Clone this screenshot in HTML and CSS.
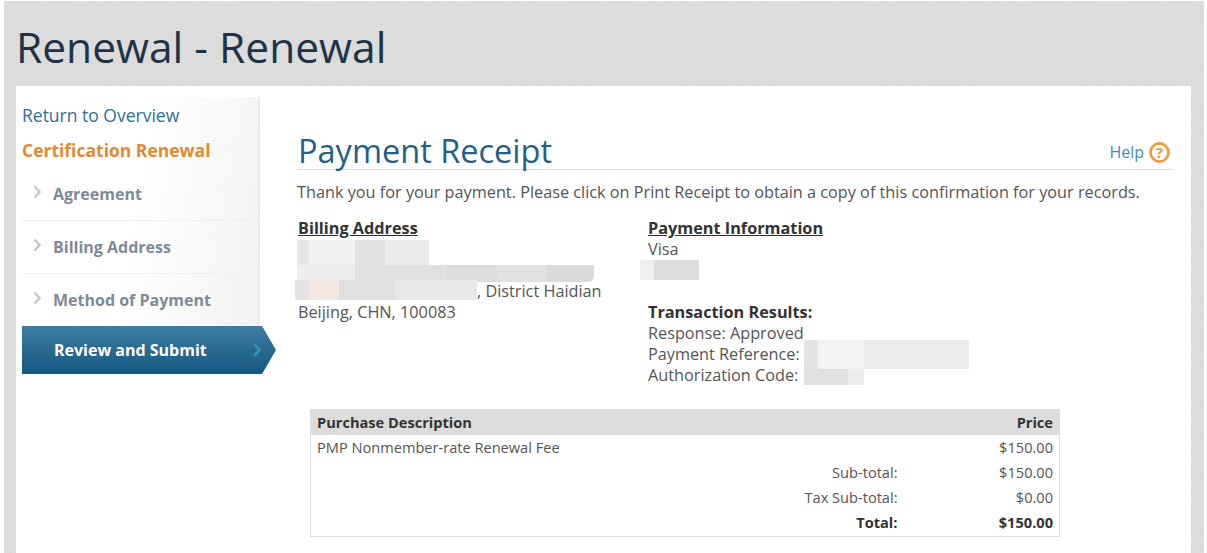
FILE: index.html
```html
<!DOCTYPE html>
<html lang="en">
<head>
<meta charset="utf-8">
<title>Renewal - Renewal</title>
<link rel="stylesheet" href="styles.css">
</head>
<body>
<div class="page">
  <h1 class="page-title">Renewal - Renewal</h1>
  <div class="panel">
    <aside class="sidebar">
      <a class="back-link">Return to Overview</a>
      <div class="side-heading">Certification Renewal</div>
      <ul class="steps">
        <li class="step"><svg class="chev" viewBox="0 0 8 14"><path d="M1.5 1.5 6.5 7l-5 5.5"/></svg>Agreement</li>
        <li class="step"><svg class="chev" viewBox="0 0 8 14"><path d="M1.5 1.5 6.5 7l-5 5.5"/></svg>Billing Address</li>
        <li class="step step-last"><svg class="chev" viewBox="0 0 8 14"><path d="M1.5 1.5 6.5 7l-5 5.5"/></svg>Method of Payment</li>
      </ul>
      <div class="step-active">Review and Submit<svg class="chev-active" viewBox="0 0 8 14"><path d="M1.5 1.5 6.5 7l-5 5.5"/></svg></div>
    </aside>
    <main class="content">
      <div class="title-row">
        <h2 class="receipt-title">Payment Receipt</h2>
        <a class="help">Help<svg class="help-icon" viewBox="0 0 20 20"><circle cx="10" cy="10" r="8.6"/><text x="10" y="15" text-anchor="middle">?</text></svg></a>
      </div>
      <p class="thanks">Thank you for your payment. Please click on Print Receipt to obtain a copy of this confirmation for your records.</p>
      <div class="details">
        <div class="billing">
          <div class="label-u">Billing Address</div>
          <div class="blank-lines"></div>
          <div class="address-tail">, District Haidian</div>
          <div>Beijing, CHN, 100083</div>
          <div class="blur blur-a1"></div>
          <div class="blur blur-a3"></div>
          <div class="blur blur-a4"></div>
        </div>
        <div class="payment">
          <div class="label-u">Payment Information</div>
          <div>Visa</div>
          <div class="gap-line"></div>
          <div class="gap-line"></div>
          <div class="label">Transaction Results:</div>
          <div>Response: Approved</div>
          <div>Payment Reference:</div>
          <div>Authorization Code:</div>
          <div class="blur blur-p1"></div>
          <div class="blur blur-p2"></div>
          <div class="blur blur-p3"></div>
        </div>
      </div>
      <table class="purchase">
        <thead>
          <tr><th class="col-desc">Purchase Description</th><th class="col-sub"></th><th class="col-price">Price</th></tr>
        </thead>
        <tbody>
          <tr><td>PMP Nonmember-rate Renewal Fee</td><td></td><td class="num">$150.00</td></tr>
          <tr><td></td><td class="num">Sub-total:</td><td class="num">$150.00</td></tr>
          <tr><td></td><td class="num">Tax Sub-total:</td><td class="num">$0.00</td></tr>
          <tr class="total"><td></td><td class="num">Total:</td><td class="num">$150.00</td></tr>
        </tbody>
      </table>
    </main>
  </div>
</div>
</body>
</html>
```
FILE: styles.css
```css
* { box-sizing: border-box; }
html, body { margin: 0; height: 553px; overflow: hidden; background: #fff; }
body { font-family: "Open Sans", "Liberation Sans", sans-serif; color: #555; font-size: 16.25px; line-height: 21px; }
.page { margin: 1px 3px 0 4px; height: 552px; background: repeating-linear-gradient(45deg, #dbdbdb 0 2px, #dddddd 2px 4px); padding: 0 13px 0 12px; display: flex; flex-direction: column; }
.page-title { margin: 0; height: 85px; padding-top: 17px; font-size: 42.5px; line-height: 58px; font-weight: 400; color: #1e3446; }
.panel { flex: 1; background: #fff; display: flex; align-items: flex-start; min-height: 0; }
.sidebar { width: 244px; height: 277px; margin-top: 11px; background: linear-gradient(100deg, #fff 45%, #f2f2f2 100%); border-right: 2px solid #ebebeb; padding: 8px 0 0 6px; flex: none; }
.back-link { display: block; font-size: 17.5px; line-height: 21px; color: #2f6f97; }
.side-heading { margin-top: 14px; font-size: 17.5px; line-height: 21px; font-weight: 700; color: #e08a33; }
.steps { list-style: none; margin: 7px 0 0; padding: 0; }
.step { height: 53px; display: flex; align-items: center; gap: 12px; padding: 0 0 0 11px; font-size: 16px; font-weight: 700; color: #7d8b99; border-bottom: 1px solid #f0f0f0; }
.step-last { height: 52px; border-bottom: 0; }
.chev { width: 8px; height: 14px; flex: none; margin-top: -4px; }
.chev path { fill: none; stroke: #c8c8c8; stroke-width: 2.4; }
.step-active { width: 254px; height: 48px; display: flex; align-items: center; justify-content: space-between; padding: 0 15px 0 32px; position: relative; z-index: 1; font-size: 16px; font-weight: 700; color: #fff; background: linear-gradient(#3f7da3, #14577f); clip-path: polygon(0 0, 240px 0, 254px 50%, 240px 100%, 0 100%); }
.chev-active { width: 8px; height: 14px; }
.chev-active path { fill: none; stroke: #2a9cb8; stroke-width: 2.6; }
.content { flex: 1; min-width: 0; padding: 41px 18px 0 37px; }
.title-row { height: 43px; display: flex; justify-content: space-between; align-items: flex-end; border-bottom: 1px solid #dddddd; margin-left: 0; }
.receipt-title { margin: 0 0 -5px 1px; font-size: 32.5px; line-height: 46px; font-weight: 400; color: #235f86; }
.help { display: flex; align-items: center; gap: 5px; font-size: 16px; color: #3d8fb8; margin: 0 3px 6px 0; }
.help-icon { width: 21px; height: 21px; }
.help-icon circle { fill: none; stroke: #ef9a3c; stroke-width: 2.6; }
.help-icon text { font-family: "Open Sans", sans-serif; font-size: 14px; font-weight: 700; fill: #ef9a3c; }
.thanks { margin: 12px 0 0; line-height: 21px; }
.details { display: flex; margin: 15px 0 0 1px; }
.billing { width: 350px; position: relative; }
.payment { position: relative; }
.label-u { font-weight: 700; color: #333; text-decoration: underline; }
.label { font-weight: 700; color: #333; }
.blank-lines { height: 42px; }
.address-tail { padding-left: 179px; }
.gap-line { height: 21px; }
.blur { position: absolute; }
.blur-a1 { left: -1px; top: 22px; width: 132px; height: 25px; background: linear-gradient(90deg, #e6e6e6 0 12px, #f0f0f0 12px 58px, #e2e2e2 58px 88px, #ebebeb 88px 132px); }
.blur-a3 { left: -1px; top: 47px; width: 297px; height: 17px; background: linear-gradient(90deg, #ededed 0 58px, #e0e0e0 58px 150px, #dcdcdc 150px 200px, #e2e2e2 200px 250px, #dadada 250px 297px); border-radius: 0 0 6px 0; }
.blur-a4 { left: -3px; top: 62px; width: 182px; height: 20px; background: linear-gradient(90deg, #e4e4e4 0 14px, #f3e9e2 14px 44px, #e0e0e0 44px 100px, #e8e8e8 100px 182px); }
.blur-p1 { left: -8px; top: 42px; width: 59px; height: 20px; background: linear-gradient(90deg, #efefef 0 14px, #dcdcdc 14px 59px); }
.blur-p2 { left: 156px; top: 122px; width: 165px; height: 29px; background: linear-gradient(90deg, #e4e4e4 0 14px, #f3f3f3 14px 60px, #ececec 60px 165px); }
.blur-p3 { left: 156px; top: 151px; width: 60px; height: 16px; background: linear-gradient(90deg, #e0e0e0 0 44px, #ededed 44px 60px); }
.purchase { width: 750px; margin: 23px 0 0 13px; border-collapse: collapse; border: 1px solid #dddddd; font-size: 14.6px; line-height: 19px; table-layout: fixed; }
.purchase th { height: 25px; padding: 0 6px; background: #dcdcdc; color: #333; font-weight: 700; text-align: left; }
.purchase td { height: 25px; padding: 0 6px; }
.col-desc { width: 400px; }
.col-sub { width: 193px; }
.purchase .col-price { text-align: right; }
.purchase .num { text-align: right; }
.purchase .total td { height: 27px; font-weight: 700; color: #333; }
```
